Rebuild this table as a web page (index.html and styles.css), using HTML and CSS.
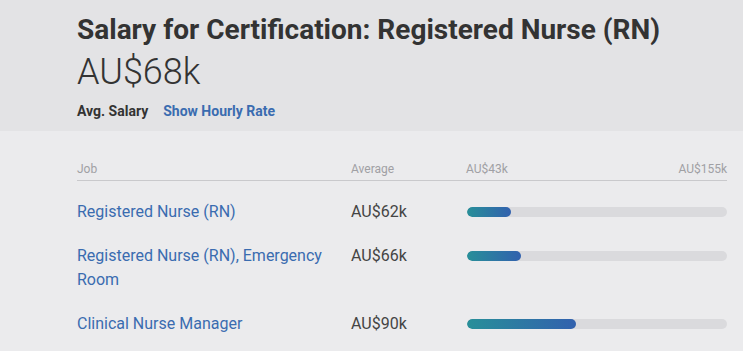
FILE: index.html
```html
<!DOCTYPE html>
<html>
<head>
<meta charset="utf-8">
<link rel="stylesheet" href="styles.css">
</head>
<body>
<header class="hero">
  <h1 class="title">Salary for Certification: Registered Nurse (RN)</h1>
  <div class="amount">AU$68k</div>
  <div class="meta">
    <span class="meta-label">Avg. Salary</span>
    <a class="meta-link" href="#">Show Hourly Rate</a>
  </div>
</header>
<section class="table">
  <div class="thead">
    <div class="c-job">Job</div>
    <div class="c-avg">Average</div>
    <div class="c-range"><span>AU$43k</span><span>AU$155k</span></div>
  </div>
  <div class="row">
    <a class="c-job job" href="#">Registered Nurse (RN)</a>
    <div class="c-avg avg">AU$62k</div>
    <div class="c-range"><div class="track"><div class="fill" style="width:44px"></div></div></div>
  </div>
  <div class="row">
    <a class="c-job job" href="#">Registered Nurse (RN), Emergency Room</a>
    <div class="c-avg avg">AU$66k</div>
    <div class="c-range"><div class="track"><div class="fill" style="width:54px"></div></div></div>
  </div>
  <div class="row">
    <a class="c-job job" href="#">Clinical Nurse Manager</a>
    <div class="c-avg avg">AU$90k</div>
    <div class="c-range"><div class="track"><div class="fill" style="width:109px"></div></div></div>
  </div>
</section>
</body>
</html>
```
FILE: styles.css
```css
* { box-sizing: border-box; }
html, body { margin: 0; padding: 0; }
body {
  font-family: Roboto, "Liberation Sans", sans-serif;
  background: #ebebed;
  width: 743px;
  height: 351px;
  overflow: hidden;
}
.hero {
  background: #e3e3e5;
  padding: 12px 16px 13px 77px;
  height: 131px;
}
.title {
  margin: 0;
  font-size: 28px;
  font-weight: 700;
  color: #333;
  line-height: 36px;
}
.amount {
  font-size: 36px;
  font-weight: 300;
  color: #333;
  line-height: 42px;
  margin-top: 3px;
}
.meta {
  display: flex;
  gap: 15px;
  margin-top: 9px;
  font-size: 14px;
  font-weight: 700;
  line-height: 18px;
}
.meta-label { color: #333; }
.meta-link { color: #3a6cb0; text-decoration: none; }
.table {
  padding: 30px 16px 0 77px;
}
.thead {
  display: flex;
  font-size: 12px;
  color: #a0a0a4;
  line-height: 16px;
  padding-bottom: 3px;
  border-bottom: 1px solid #c9c9cc;
  width: 650px;
}
.c-job { width: 274px; flex: none; padding-right: 14px; }
.c-avg { width: 115px; flex: none; }
.c-range { flex: 1; display: flex; justify-content: space-between; }
.row {
  display: flex;
  width: 650px;
  padding: 10px 0;
  line-height: 24px;
  font-size: 16px;
}
.thead + .row { padding-top: 19px; }
.job { color: #3a6cb0; text-decoration: none; }
.avg { color: #444; }
.track {
  margin-top: 7px;
  margin-left: 1px;
  width: 100%;
  height: 10px;
  border-radius: 5px;
  background: #dadadd;
  overflow: hidden;
}
.fill {
  height: 100%;
  border-radius: 5px;
  background: linear-gradient(90deg, #288f99, #3261ae);
}
```
